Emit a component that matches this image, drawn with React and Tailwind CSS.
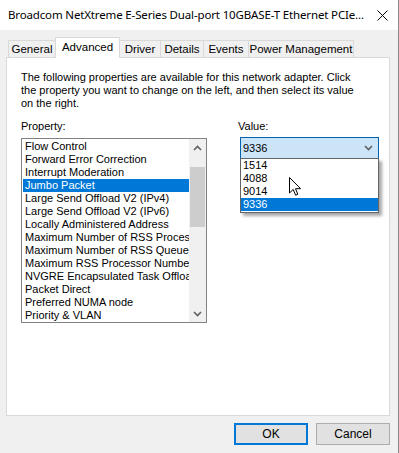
import { useState } from 'react';

const properties = [
  'Flow Control',
  'Forward Error Correction',
  'Interrupt Moderation',
  'Jumbo Packet',
  'Large Send Offload V2 (IPv4)',
  'Large Send Offload V2 (IPv6)',
  'Locally Administered Address',
  'Maximum Number of RSS Processors',
  'Maximum Number of RSS Queues',
  'Maximum RSS Processor Number',
  'NVGRE Encapsulated Task Offload',
  'Packet Direct',
  'Preferred NUMA node',
  'Priority & VLAN',
];

const values = ['1514', '4088', '9014', '9336'];

const tabs = [
  { label: 'General', w: 'w-[48px]' },
  { label: 'Advanced', w: 'w-[65px]' },
  { label: 'Driver', w: 'w-[42px] ml-0' },
  { label: 'Details', w: 'w-[44px] -ml-px' },
  { label: 'Events', w: 'w-[46px] -ml-px' },
  { label: 'Power Management', w: 'w-[106px] -ml-px' },
];

function Chevron({ up }) {
  return (
    <svg width="9" height="6" viewBox="0 0 9 6" className="block">
      <path
        d={up ? 'M1 5 L4.5 1.5 L8 5' : 'M1 1 L4.5 4.5 L8 1'}
        fill="none"
        stroke="#606060"
        strokeWidth="1.6"
      />
    </svg>
  );
}

function Cursor() {
  return (
    <svg width="13" height="20" viewBox="0 0 13 20" className="absolute left-[49px] top-[18px]">
      <path
        d="M0.5 0.5 L0.5 16 L4.2 12.4 L6.6 18.2 L8.8 17.3 L6.5 11.7 L11.6 11.7 Z"
        fill="#ffffff"
        stroke="#000000"
        strokeWidth="1"
        strokeLinejoin="miter"
      />
    </svg>
  );
}

export default function App() {
  const [selected] = useState('Jumbo Packet');

  return (
    <div className="w-[399px] h-[453px] bg-[#f0f0f0] overflow-hidden text-black font-['Liberation_Sans',Arial,sans-serif] border-r border-[#8a8a8a]">
      <div className="h-[30px] bg-white flex items-center justify-between pl-[8px] pr-[10px]">
        <span className="text-[11.5px] font-['Noto_Sans',sans-serif] tracking-[-0.15px] whitespace-nowrap text-black">
          Broadcom NetXtreme E-Series Dual-port 10GBASE-T Ethernet PCIe...
        </span>
        <svg width="11" height="11" viewBox="0 0 11 11" className="shrink-0">
          <path d="M0.5 0.5 L10.5 10.5 M10.5 0.5 L0.5 10.5" stroke="#000" strokeWidth="1" />
        </svg>
      </div>

      <div className="mt-[7px] h-[20px] flex items-end pl-[8px] text-[11.5px] whitespace-nowrap">
        {tabs.map((t) =>
          t.label === 'Advanced' ? (
            <div
              key={t.label}
              className={`${t.w} h-[21px] -mb-px -mx-[1px] relative z-10 bg-white border border-b-0 border-[#d9d9d9] flex items-start justify-center pt-[2px] leading-[14px]`}
            >
              {t.label}
            </div>
          ) : (
            <div
              key={t.label}
              className={`${t.w} h-[17px] bg-[#f0f0f0] border border-b-0 border-[#d9d9d9] flex items-start justify-center pt-[1px] leading-[14px]`}
            >
              {t.label}
            </div>
          )
        )}
      </div>

      <div className="ml-[6px] w-[384px] h-[359px] bg-white border border-[#d9d9d9] pl-[14px] pt-[13px] text-[11px] leading-[13px]">
        <p className="w-[346px]">
          The following properties are available for this network adapter. Click the property you want to change on the left, and then select its value on the right.
        </p>

        <div className="flex mt-[10px]">
          <div className="w-[186px]">
            <div className="h-[13px] mb-[5px]">Property:</div>
            <div className="h-[185px] border border-[#828282] flex">
              <div className="flex-1 pt-[1px] pl-[1px] overflow-hidden">
                {properties.map((p) => (
                  <div
                    key={p}
                    className={`h-[13px] pl-[2px] whitespace-nowrap overflow-hidden ${
                      p === selected ? 'bg-[#0078d7] text-white' : ''
                    }`}
                  >
                    {p}
                  </div>
                ))}
              </div>
              <div className="w-[17px] bg-[#f0f0f0] flex flex-col">
                <div className="h-[17px] flex items-center justify-center">
                  <Chevron up />
                </div>
                <div className="h-[11px]" />
                <div className="h-[60px] mx-[1px] bg-[#cdcdcd]" />
                <div className="flex-1" />
                <div className="h-[17px] flex items-center justify-center">
                  <Chevron />
                </div>
              </div>
            </div>
          </div>

          <div className="ml-[33px] w-[139px]">
            <div className="h-[13px] mb-[4px] -ml-[2px]">Value:</div>
            <div className="relative">
              <div className="h-[22px] border border-[#0063b1] bg-[#cce4f7] flex items-center justify-between pl-[2px] pr-[5px]">
                <span>9336</span>
                <Chevron />
              </div>
              <div className="absolute left-0 top-[21px] w-[139px] h-[55px] bg-white border border-[#646464] shadow-[3px_3px_3px_rgba(0,0,0,0.35)] z-20">
                {values.map((v) => (
                  <div
                    key={v}
                    className={`h-[13px] pl-[2px] ${v === '9336' ? 'bg-[#0078d7] text-white' : ''}`}
                  >
                    {v}
                  </div>
                ))}
              </div>
              <div className="z-30 relative">
                <Cursor />
              </div>
            </div>
          </div>
        </div>
      </div>

      <div className="flex justify-end gap-[8px] pr-[8px] mt-[7px] text-[12px]">
        <button className="w-[74px] h-[22px] bg-[#e1e1e1] border-2 border-[#0078d7] flex items-center justify-center">
          OK
        </button>
        <button className="w-[74px] h-[22px] bg-[#e1e1e1] border border-[#adadad] flex items-center justify-center">
          Cancel
        </button>
      </div>
    </div>
  );
}
